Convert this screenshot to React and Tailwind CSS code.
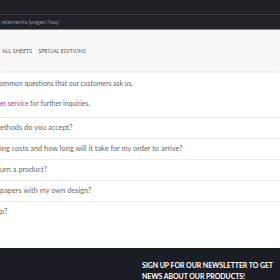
const questions = [
  'ethods do you accept?',
  'ing costs and how long will it take for my order to arrive?',
  'urn a product?',
  'papers with my own design?',
  'p?',
]

export default function App() {
  return (
    <div className="w-[280px] h-[280px] overflow-hidden bg-white font-['Lato',sans-serif] flex flex-col">
      {/* Browser chrome */}
      <div className="h-[15px] shrink-0 bg-[#1f2127] border-b border-[#35373d]" />
      <div className="h-[15px] shrink-0 bg-[#202228] border-b border-[#86878b] flex items-center">
        <span className="text-[6.2px] text-[#8d8f95]">/elements/pages/faq/</span>
      </div>

      {/* Header */}
      <div className="h-[41px] shrink-0 bg-[#f8f8f9] shadow-[0_2px_3px_rgba(0,0,0,0.06)] flex items-start pt-[18px] pl-[2px] gap-[6px]">
        <span className="text-[5.3px] tracking-[0.02em] text-[#555]">ALL SHEETS</span>
        <span className="text-[5.3px] tracking-[0.02em] text-[#555]">SPECIAL EDITIONS</span>
      </div>

      {/* FAQ content */}
      <div className="mt-[2px] text-[6.8px] leading-[20px] text-[#666] whitespace-nowrap">
        <p>ommon questions that our customers ask us.</p>
        <p>
          <span className="text-[#b23aa2]">er service</span> for further inquiries.
        </p>
      </div>
      <div className="mt-[4px] text-[7.4px] text-[#6b6b6b] whitespace-nowrap">
        {questions.map(q => (
          <div key={q} className="h-[21px] border-t border-[#ececec] flex items-center">
            {q}
          </div>
        ))}
      </div>

      {/* Footer */}
      <div className="mt-auto h-[32px] shrink-0 bg-[#1b1d24] pt-[12px] pl-[142px] whitespace-nowrap">
        <p className="text-[7px] leading-[11px] font-bold tracking-[-0.01em] text-white">SIGN UP FOR OUR NEWSLETTER TO GET</p>
        <p className="text-[7px] leading-[11px] font-bold tracking-[-0.01em] text-white">NEWS ABOUT OUR PRODUCTS!</p>
      </div>
    </div>
  )
}
